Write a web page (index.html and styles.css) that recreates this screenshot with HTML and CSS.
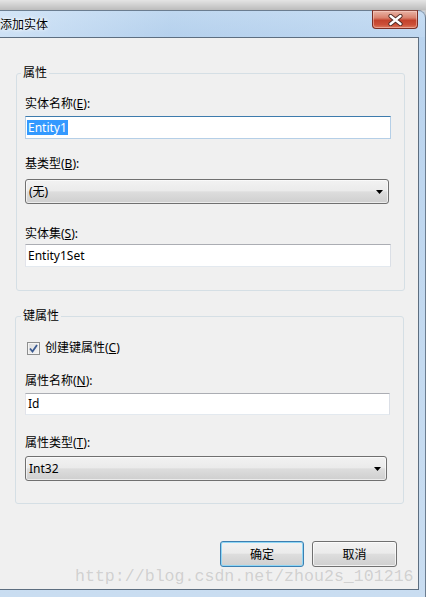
FILE: index.html
```html
<!DOCTYPE html>
<html>
<head>
<meta charset="utf-8">
<link rel="stylesheet" href="styles.css">
</head>
<body>
<div class="shadow"></div>
<div class="frame">
  <div class="titlebar">
    <span class="title">添加实体</span>
    <button class="close" type="button" aria-label="关闭">
      <svg width="15" height="12" viewBox="0 0 15 12"><path d="M2.5 2 L12.5 10 M12.5 2 L2.5 10" stroke="#4f2a24" stroke-width="4.2" stroke-linecap="round" fill="none"/><path d="M2.5 2 L12.5 10 M12.5 2 L2.5 10" stroke="#ffffff" stroke-width="2.4" stroke-linecap="round" fill="none"/></svg>
    </button>
  </div>
  <div class="frame-body">
    <div class="client">
      <fieldset class="group g1">
        <legend>属性</legend>
        <div class="label">实体名称(<u>E</u>):</div>
        <div class="textbox focused tb1"><span class="sel">Entity1</span></div>
        <div class="label l2">基类型(<u>B</u>):</div>
        <div class="combo c1"><span>(无)</span><svg class="arrow" width="7" height="4" viewBox="0 0 7 4"><path d="M0 0 H7 L3.5 4 Z" fill="#000"/></svg></div>
        <div class="label l3">实体集(<u>S</u>):</div>
        <div class="textbox tb3"><span>Entity1Set</span></div>
      </fieldset>
      <fieldset class="group g2">
        <legend>键属性</legend>
        <div class="check-row">
          <span class="checkbox"><svg width="11" height="11" viewBox="0 0 11 11"><path d="M2 5.5 L4.5 8.5 L9 2" stroke="#3b5a91" stroke-width="1.8" fill="none"/></svg></span>
          <span>创建键属性(<u>C</u>)</span>
        </div>
        <div class="label l4">属性名称(<u>N</u>):</div>
        <div class="textbox tb4"><span>Id</span></div>
        <div class="label l5">属性类型(<u>T</u>):</div>
        <div class="combo c2"><span>Int32</span><svg class="arrow" width="7" height="4" viewBox="0 0 7 4"><path d="M0 0 H7 L3.5 4 Z" fill="#000"/></svg></div>
      </fieldset>
      <div class="buttons">
        <button class="btn ok" type="button">确定</button>
        <button class="btn cancel" type="button">取消</button>
      </div>
      <div class="watermark">http://blog.csdn.net/zhou2s_101216</div>
    </div>
  </div>
</div>
</body>
</html>
```
FILE: styles.css
```css
* { box-sizing: border-box; }
html, body { margin: 0; padding: 0; }
body {
  width: 426px;
  height: 597px;
  overflow: hidden;
  background: #c8c8c8;
  font-family: "Noto Sans", "Noto Sans CJK SC", sans-serif;
  font-size: 12px;
  line-height: 16px;
  color: #000;
}
.shadow {
  height: 10px;
  background: linear-gradient(#e4e4e4, #bcbcbc);
}
.frame {
  height: 587px;
  border-top: 1px solid #6b7d90;
  border-right: 1px solid #6b7d90;
  border-top-right-radius: 8px;
  background: linear-gradient(180deg, #c6dcf2 0%, #b9d3ee 4%, #c4daf0 60%, #c9ddf1 100%);
  display: flex;
  flex-direction: column;
}
.titlebar {
  height: 26px;
  display: flex;
  justify-content: space-between;
  align-items: flex-start;
  background: linear-gradient(90deg, rgba(220,235,250,0.6), rgba(175,205,235,0.3) 40%, rgba(200,222,244,0.4));
}
.title {
  align-self: center;
  margin-top: 1px;
  text-shadow: 0 0 5px #fff, 0 0 3px #fff;
}
.close {
  margin: -1px 7px 0 0;
  width: 46px;
  height: 19px;
  padding: 0;
  border: 1px solid #7b2e24;
  border-top-color: #8a4a40;
  border-radius: 0 0 4px 4px;
  background: linear-gradient(180deg, #e9b4a6 0%, #d9826e 40%, #c3422c 55%, #cc5038 80%, #dd7a5e 100%);
  display: flex;
  align-items: center;
  justify-content: center;
  box-shadow: inset 0 0 0 1px rgba(255,220,210,0.45);
}
.frame-body {
  flex: 1;
  display: flex;
  align-items: flex-start;
}
.client {
  position: relative;
  width: 419px;
  height: 553px;
  background: #f0f0f0;
  border-top: 1px solid #5d6e80;
  border-right: 1px solid #5d6e80;
  border-bottom: 1px solid #5d6e80;
}
.group {
  width: 389px;
  min-width: 0;
  border: 1px solid #d5dfe5;
  border-radius: 3px;
}
.group legend {
  padding: 0 2px;
  margin-left: -4px;
  line-height: 16px;
}
.g1 {
  margin: 27px 0 0 16px;
  padding: 15px 12px 23px 8px;
}
.g2 {
  margin: 17px 0 0 15px;
  padding: 16px 13px 22px 9px;
}
.label { height: 16px; white-space: nowrap; }
.l2 { margin-top: 17px; }
.l3 { margin-top: 22px; }
.l4 { margin-top: 17px; }
.l5 { margin-top: 20px; }
.textbox {
  background: #fff;
  border: 1px solid;
  border-color: #abadb3 #dbdfe6 #e3e9ef #e2e3ea;
  display: flex;
  align-items: center;
  padding-left: 2px;
  white-space: nowrap;
}
.tb1 { width: 366px; height: 23px; margin-top: 4px; padding-left: 1px; }
.tb3 { width: 366px; height: 23px; margin-top: 2px; }
.tb4 { width: 365px; height: 22px; margin-top: 4px; }
.textbox.focused {
  border-color: #3d7bad #b5cfe7 #b5cfe7 #b5cfe7;
}
.sel {
  background: #3399ff;
  color: #fff;
  line-height: 15px;
  padding: 0 1px;
}
.combo {
  height: 25px;
  border: 1px solid #707070;
  border-radius: 3px;
  background: linear-gradient(180deg, #f2f2f2 0%, #ebebeb 46%, #dddddd 52%, #cfcfcf 100%);
  display: flex;
  align-items: center;
  justify-content: space-between;
  padding: 0 5px 0 3px;
  box-shadow: inset 0 0 0 1px rgba(255,255,255,0.6);
}
.c1 { width: 364px; margin-top: 7px; }
.c2 { width: 362px; margin-top: 5px; }
.check-row {
  height: 16px;
  display: flex;
  align-items: center;
  gap: 5px;
  padding-left: 2px;
}
.checkbox {
  width: 13px;
  height: 13px;
  border: 1px solid #8e8f8f;
  background: linear-gradient(135deg, #dcdcdc, #f6f6f6);
  box-shadow: inset 0 0 0 1px #f4f4f4;
  display: flex;
  align-items: center;
  justify-content: center;
}
.buttons {
  margin-top: 37px;
  display: flex;
  justify-content: flex-end;
  gap: 8px;
  padding-right: 21px;
}
.btn {
  height: 26px;
  padding: 0;
  border: 1px solid #707070;
  border-radius: 3px;
  background: linear-gradient(180deg, #f2f2f2 0%, #ebebeb 46%, #dddddd 52%, #cfcfcf 100%);
  font-family: "Noto Sans", "Noto Sans CJK SC", sans-serif;
  font-size: 12px;
  color: #000;
  box-shadow: inset 0 0 0 1px rgba(255,255,255,0.7);
}
.ok {
  width: 84px;
  border-color: #3c7fb1;
  box-shadow: inset 0 0 0 1px #8fd6f5;
}
.cancel { width: 85px; }
.watermark {
  position: absolute;
  left: 75px;
  top: 530px;
  font-family: "Liberation Mono", monospace;
  font-size: 16.6px;
  line-height: 18px;
  color: rgba(130,130,130,0.3);
  white-space: nowrap;
}
```
